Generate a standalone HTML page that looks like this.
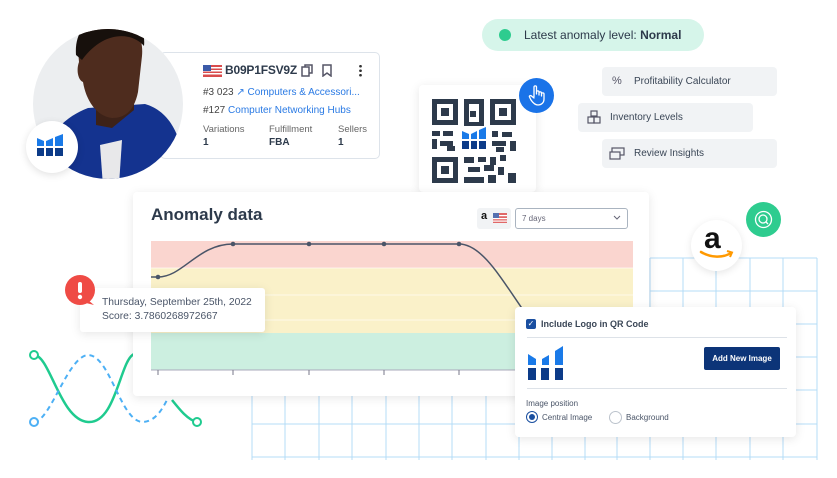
<!DOCTYPE html>
<html><head><meta charset="utf-8"><style>
*{margin:0;padding:0;box-sizing:border-box}
body{width:837px;height:478px;background:#fff;position:relative;overflow:hidden;font-family:"Liberation Sans",sans-serif;color:#2d3a4b}
.a{position:absolute}
.card{position:absolute;background:#fff;border-radius:4px;box-shadow:0 2px 10px rgba(0,0,0,.1)}
.btn{position:absolute;background:#f1f3f5;border-radius:4px;font-size:10px;color:#3a4656;display:flex;align-items:center}
.lnk{color:#2a7ae4}
</style></head><body>

<!-- grid & waves -->
<svg class="a" style="left:0;top:0" width="837" height="478">
<g stroke="#b4dcf7" stroke-width="1" fill="none">
<path d="M252 395V460M285 395V460M319 395V460M352 395V460M386 395V460M419 395V460M452 395V460M486 395V460M519 395V460"/>
<path d="M252 424H519M252 457H519"/>
<path d="M650 258V460M683 258V460M716 258V460M750 258V460M783 258V460M817 258V460M552 395V460M585 395V460M617 395V460"/>
<path d="M650 258H817M650 291H817M650 324H817M650 357H817M650 390H817M519 424H817M519 457H817"/>
</g>
<path d="M34 355C50 355 60 420 88 422C116 424 120 360 134 354" stroke="#1fcb8f" stroke-width="2.5" fill="none"/>
<path d="M172 400C180 410 188 420 197 422" stroke="#1fcb8f" stroke-width="2.5" fill="none"/>
<path d="M34 422C50 422 68 356 88 355C110 355 120 420 142 422C155 422 162 410 168 398" stroke="#4db0f5" stroke-width="2" stroke-dasharray="5 4" fill="none"/>
<circle cx="34" cy="355" r="4" fill="#fff" stroke="#1fcb8f" stroke-width="2"/>
<circle cx="197" cy="422" r="4" fill="#fff" stroke="#1fcb8f" stroke-width="2"/>
<circle cx="34" cy="422" r="4" fill="#fff" stroke="#4db0f5" stroke-width="2"/>
</svg>

<!-- product card -->
<div class="a" style="left:160px;top:52px;width:220px;height:107px;background:#fff;border:1px solid #dde3ea;border-radius:5px"></div>

<!-- photo -->
<svg class="a" style="left:0;top:0" width="200" height="200">
<defs><clipPath id="c"><circle cx="108" cy="104" r="75"/></clipPath></defs>
<circle cx="108" cy="104" r="75" fill="#eceef0"/>
<g clip-path="url(#c)">
<path d="M35 195C38 140 62 118 88 108L145 104C172 112 186 140 186 195Z" fill="#14338f"/>
<path d="M100 145L104 200L118 200L122 140Z" fill="#e8e8ea"/>
<path d="M96 95L96 125L112 128L134 110L134 92Z" fill="#3d2218"/>
<path d="M78 50C78 28 94 20 112 20C132 20 144 34 142 56L138 92C134 112 124 118 112 118C96 116 86 100 83 82C78 80 76 70 79 62Z" fill="#4e2c1e"/>
<path d="M76 55C74 28 92 14 114 15C134 16 146 28 144 46C132 32 104 30 82 60Z" fill="#17100c"/>
</g>
</svg>
<div class="a" style="left:26px;top:121px;width:52px;height:52px;border-radius:50%;background:#fff;box-shadow:0 2px 8px rgba(0,0,0,.12)"></div>
<svg class="a" style="left:36px;top:134px" width="28" height="28"><path d="M1 4L8 7V12H1Z M10 7L17 4V12H10Z M19 3L27 0V12H19Z" fill="#1a7ae8"/><path d="M1 14H8V22H1Z M10 14H17V22H10Z M19 14H27V22H19Z" fill="#0c3b88"/></svg>

<svg class="a" style="left:203px;top:65px" width="19" height="12"><rect width="19" height="12" fill="#d94c4c"/><g fill="#fff"><rect y="2" width="19" height="1.5"/><rect y="5" width="19" height="1.5"/><rect y="8" width="19" height="1.5"/></g><rect width="8" height="6" fill="#3b5aa8"/></svg>
<div class="a" style="left:225px;top:63px;font-size:12px;font-weight:bold;color:#2d3a4b;letter-spacing:-0.2px">B09P1FSV9Z</div>
<svg class="a" style="left:301px;top:64px" width="12" height="13"><rect x="1" y="3" width="7" height="9" fill="none" stroke="#556" stroke-width="1.5"/><path d="M4 3V1H11V9H8" fill="none" stroke="#556" stroke-width="1.5"/></svg>
<svg class="a" style="left:322px;top:64px" width="10" height="13"><path d="M1 1H9V12L5 9L1 12Z" fill="none" stroke="#556" stroke-width="1.5"/></svg>
<div class="a" style="left:359px;top:64px;width:3px;height:13px;background:radial-gradient(circle,#333 1.2px,transparent 1.5px) 0 0/3px 4.5px"></div>
<div class="a" style="left:203px;top:87px;font-size:10px;color:#444">#3 023 <span class="lnk">&#8599;</span> <span class="lnk">Computers &amp; Accessori...</span></div>
<div class="a" style="left:203px;top:105px;font-size:10px;color:#444">#127 <span class="lnk">Computer Networking Hubs</span></div>
<div class="a" style="left:203px;top:124px;font-size:9.5px;color:#666">Variations</div>
<div class="a" style="left:269px;top:124px;font-size:9.5px;color:#666">Fulfillment</div>
<div class="a" style="left:338px;top:124px;font-size:9.5px;color:#666">Sellers</div>
<div class="a" style="left:203px;top:137px;font-size:10px;font-weight:bold">1</div>
<div class="a" style="left:269px;top:137px;font-size:10px;font-weight:bold">FBA</div>
<div class="a" style="left:338px;top:137px;font-size:10px;font-weight:bold">1</div>

<!-- pill -->
<div class="a" style="left:482px;top:19px;width:222px;height:32px;border-radius:16px;background:#d6f5ea"></div>
<div class="a" style="left:499px;top:29px;width:12px;height:12px;border-radius:50%;background:#2ecc8f"></div>
<div class="a" style="left:524px;top:28px;font-size:12px;color:#2d3a4b">Latest anomaly level: <b>Normal</b></div>

<!-- buttons -->
<div class="btn" style="left:602px;top:67px;width:175px;height:29px;padding-left:32px">Profitability Calculator</div>
<div class="a" style="left:612px;top:75px;font-size:11px;color:#556">%</div>
<div class="btn" style="left:578px;top:103px;width:175px;height:29px;padding-left:32px">Inventory Levels</div>
<svg class="a" style="left:587px;top:110px" width="14" height="14"><g fill="none" stroke="#556" stroke-width="1.2"><rect x="4" y="1" width="6" height="5"/><rect x="1" y="7" width="6" height="6"/><rect x="7" y="7" width="6" height="6"/></g></svg>
<div class="btn" style="left:602px;top:139px;width:175px;height:29px;padding-left:32px">Review Insights</div>
<svg class="a" style="left:609px;top:147px" width="16" height="13"><g fill="none" stroke="#556" stroke-width="1.2"><rect x="3" y="1" width="12" height="7"/><rect x="1" y="5" width="10" height="7" fill="#f1f3f5"/></g></svg>

<!-- QR card -->
<div class="card" style="left:419px;top:85px;width:117px;height:107px"></div>
<svg class="a" style="left:432px;top:99px" width="84" height="84">
<g fill="#2d3a4b">
<path d="M0 0H26V26H0ZM5 5V21H21V5Z" fill-rule="evenodd"/><rect x="9" y="9" width="8" height="8"/>
<path d="M58 0H84V26H58ZM63 5V21H79V5Z" fill-rule="evenodd"/><rect x="67" y="9" width="8" height="8"/>
<path d="M0 58H26V84H0ZM5 63V79H21V63Z" fill-rule="evenodd"/><rect x="9" y="67" width="8" height="8"/>
<rect x="32" y="0" width="20" height="5"/><rect x="32" y="5" width="5" height="18"/><rect x="47" y="5" width="5" height="20"/><rect x="38" y="12" width="6" height="6"/><rect x="32" y="23" width="20" height="4"/>
<rect x="0" y="32" width="8" height="5"/><rect x="11" y="32" width="10" height="5"/><rect x="0" y="40" width="5" height="10"/><rect x="8" y="42" width="13" height="5"/><rect x="15" y="47" width="8" height="5"/>
<rect x="60" y="32" width="6" height="6"/><rect x="70" y="33" width="10" height="5"/><rect x="60" y="42" width="14" height="5"/><rect x="78" y="42" width="6" height="10"/><rect x="64" y="48" width="8" height="5"/>
<rect x="32" y="58" width="10" height="6"/><rect x="46" y="58" width="8" height="5"/><rect x="58" y="58" width="6" height="8"/><rect x="68" y="56" width="6" height="6"/><rect x="36" y="68" width="12" height="5"/><rect x="52" y="66" width="10" height="6"/><rect x="66" y="68" width="6" height="8"/><rect x="32" y="78" width="20" height="6"/><rect x="56" y="76" width="8" height="8"/><rect x="76" y="74" width="8" height="10"/>
</g>
<path d="M30 32L37 35V40H30Z M39 35L45 32V40H39Z M47 31L54 28V40H47Z" fill="#1a7ae8"/>
<path d="M30 42H37V50H30Z M39 42H45V50H39Z M47 42H54V50H47Z" fill="#0c3b88"/>
</svg>
<div class="a" style="left:519px;top:78px;width:35px;height:35px;border-radius:50%;background:#1a73e8"></div>
<svg class="a" style="left:527px;top:84px" width="20" height="22"><path d="M7 13V3C7 1.5 9.5 1.5 9.5 3V10M9.5 8C9.5 6.5 12 6.5 12 8V11M12 9C12 7.5 14.5 7.5 14.5 9V12M14.5 10C14.5 8.5 17 8.5 17 10V15C17 19 14 21 11 21C8 21 6 19 4 16L2.5 13C2 12 3.5 11 4.5 12L7 14" fill="none" stroke="#fff" stroke-width="1.3" stroke-linecap="round"/></svg>

<!-- green search & amazon -->
<div class="a" style="left:746px;top:202px;width:35px;height:35px;border-radius:50%;background:#2ecc8f"></div>
<svg class="a" style="left:753px;top:209px" width="21" height="21"><circle cx="10.5" cy="10.5" r="8" fill="none" stroke="#fff" stroke-width="1.3"/><circle cx="10" cy="10" r="4" fill="none" stroke="#fff" stroke-width="1.3"/><path d="M13 13L15 15" stroke="#fff" stroke-width="1.3"/></svg>
<div class="a" style="left:691px;top:220px;width:51px;height:51px;border-radius:50%;background:#fff;box-shadow:0 2px 8px rgba(0,0,0,.1)"></div>
<div class="a" style="left:704px;top:222px;font-size:30px;font-weight:bold;color:#111;font-family:'Liberation Sans',sans-serif">a</div>
<svg class="a" style="left:699px;top:249px" width="36" height="12"><path d="M2 3C12 9 24 9 32 4" stroke="#f90" stroke-width="2.5" fill="none" stroke-linecap="round"/><path d="M28 2L33 3.5L31 8" stroke="#f90" stroke-width="2" fill="none"/></svg>

<!-- anomaly card -->
<div class="card" style="left:133px;top:192px;width:516px;height:204px"></div>
<div class="a" style="left:151px;top:205px;font-size:17px;font-weight:bold;color:#2d3a4b">Anomaly data</div>
<div class="a" style="left:477px;top:208px;width:34px;height:21px;background:#f1f3f5;border-radius:3px"></div>
<div class="a" style="left:481px;top:210px;font-size:11px;font-weight:bold;color:#111">a</div>
<svg class="a" style="left:493px;top:213px" width="14" height="10"><rect width="14" height="10" fill="#e06868"/><g fill="#fff"><rect y="2" width="14" height="1.2"/><rect y="5" width="14" height="1.2"/><rect y="7.5" width="14" height="1.2"/></g><rect width="6" height="5" fill="#5570b0"/></svg>
<div class="a" style="left:515px;top:208px;width:113px;height:21px;border:1px solid #aab4c0;border-radius:3px;font-size:8px;color:#667;padding:5px 0 0 6px">7 days</div>
<svg class="a" style="left:613px;top:215px" width="8" height="6"><path d="M1 1L4 4L7 1" stroke="#667" fill="none"/></svg>
<svg class="a" style="left:133px;top:192px" width="516" height="204">
<rect x="18" y="49" width="482" height="27" fill="#fad5cf"/>
<rect x="18" y="76" width="482" height="65" fill="#faf1c9"/>
<rect x="18" y="141" width="482" height="37" fill="#ccefe0"/>
<path d="M18 103H500M18 128H500M18 76H500" stroke="#fff" stroke-opacity=".6"/>
<path d="M18 178H500" stroke="#aab" stroke-width="1"/>
<path d="M25 178V183M100 178V183M176 178V183M251 178V183M326 178V183" stroke="#778" />
<path d="M18 85L25 85C50 85 65 52 100 52L326 52C350 52 370 90 395 125" stroke="#4a5568" stroke-width="1.5" fill="none"/>
<g fill="#4a5568"><circle cx="25" cy="85" r="2.3"/><circle cx="100" cy="52" r="2.3"/><circle cx="176" cy="52" r="2.3"/><circle cx="251" cy="52" r="2.3"/><circle cx="326" cy="52" r="2.3"/></g>
</svg>

<!-- tooltip -->
<div class="card" style="left:80px;top:288px;width:185px;height:44px;border-radius:3px"></div>
<div class="a" style="left:102px;top:296px;font-size:10.3px;color:#4a5568;line-height:14px">Thursday, September 25th, 2022<br>Score: 3.7860268972667</div>
<svg class="a" style="left:64px;top:274px" width="34" height="34"><circle cx="16" cy="16" r="15" fill="#ef4b45"/><path d="M24 26L30 31L22 29Z" fill="#ef4b45"/><rect x="14" y="8" width="4" height="11" rx="2" fill="#fff"/><circle cx="16" cy="23" r="2.2" fill="#fff"/></svg>

<!-- QR popup -->
<div class="card" style="left:515px;top:307px;width:281px;height:130px"></div>
<div class="a" style="left:526px;top:319px;width:10px;height:10px;background:#1a4fa0;border-radius:2px;color:#fff;font-size:8px;line-height:10px;text-align:center">&#10003;</div>
<div class="a" style="left:541px;top:319px;font-size:9px;font-weight:bold;color:#3a4656">Include Logo in QR Code</div>
<div class="a" style="left:527px;top:337px;width:260px;height:1px;background:#dde2e8"></div>
<svg class="a" style="left:528px;top:346px" width="38" height="35"><path d="M0 8L8 13V19H0Z M14 13L21 9V19H14Z M27 5L35 0V19H27Z" fill="#1a7ae8"/><path d="M0 22H8V34H0Z M13 22H21V34H13Z M27 22H35V34H27Z" fill="#0c3b88"/></svg>
<div class="a" style="left:704px;top:347px;width:76px;height:23px;background:#0c3478;border-radius:2px;color:#fff;font-size:8px;font-weight:bold;text-align:center;line-height:23px">Add New Image</div>
<div class="a" style="left:527px;top:388px;width:260px;height:1px;background:#dde2e8"></div>
<div class="a" style="left:526px;top:399px;font-size:8px;color:#4a5568">Image position</div>
<div class="a" style="left:526px;top:411px;width:12px;height:12px;border-radius:50%;border:1.5px solid #1a4fa0"></div>
<div class="a" style="left:529px;top:414px;width:6px;height:6px;border-radius:50%;background:#1a4fa0"></div>
<div class="a" style="left:542px;top:413px;font-size:8px;color:#4a5568">Central Image</div>
<div class="a" style="left:609px;top:411px;width:13px;height:13px;border-radius:50%;border:1px solid #bcc3cc"></div>
<div class="a" style="left:626px;top:413px;font-size:8px;color:#4a5568">Background</div>
</body></html>
